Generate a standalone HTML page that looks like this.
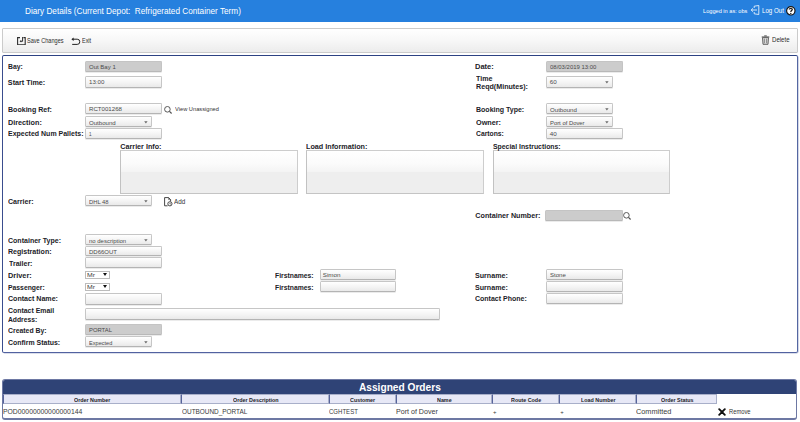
<!DOCTYPE html>
<html><head><meta charset="utf-8"><style>
*{box-sizing:border-box;margin:0;padding:0}
html,body{width:800px;height:422px;overflow:hidden;background:#fff;font-family:"Liberation Sans",sans-serif;position:relative}
.t{position:absolute;white-space:nowrap;transform-origin:0 0}
.b{position:absolute}
.in,.ro,.sel{position:absolute;border:1px solid #c6c6c6;border-bottom-color:#b4b4b4;border-radius:1.5px;background:linear-gradient(#ffffff 0%,#f4f4f4 55%,#e9e9e9 100%);box-shadow:0 1px 0 rgba(0,0,0,0.08)}
.ro{background:#cccccc;border-color:#c4c4c4;border-bottom-color:#b8b8b8}
.ar{position:absolute;width:0;height:0;border-left:1.75px solid transparent;border-right:1.75px solid transparent;border-top:2.2px solid #606060}
.ta{position:absolute;border:1px solid #cdcdcd;border-left-color:#c2c2c2;border-bottom-color:#c4c4c4;background:linear-gradient(#ffffff 0%,#fbfbfb 30%,#f4f4f4 49%,#eeeeee 50.5%,#eeeeee 100%)}
.nat{position:absolute;border:1px solid #bcbcbc;background:#fff}
.nar{position:absolute;width:0;height:0;border-left:2px solid transparent;border-right:2px solid transparent;border-top:3.4px solid #111}
</style></head><body>
<div class="b" style="left:0;top:0;width:800px;height:22px;background:#2680de"></div>
<svg class="b" style="left:750px;top:5px" width="10" height="10" viewBox="0 0 10 10"><path d="M4.2 1.2 L8.8 0.5 L8.8 9.5 L4.2 8.8" fill="none" stroke="#fff" stroke-width="0.8"/><path d="M4.2 1.2 V3 M4.2 7 V8.8" fill="none" stroke="#fff" stroke-width="0.8"/><path d="M7 5 H1.2 M3 3.3 L1.2 5 L3 6.7" fill="none" stroke="#fff" stroke-width="0.8"/></svg>
<svg class="b" style="left:785.5px;top:6px" width="10" height="10" viewBox="0 0 10 10"><circle cx="4.8" cy="4.8" r="4.2" fill="#fff" stroke="#151515" stroke-width="1.2"/><path d="M3.3 3.6 C3.3 2.1 6.3 2.1 6.3 3.6 C6.3 4.6 4.8 4.6 4.8 5.9" fill="none" stroke="#151515" stroke-width="1.2"/><circle cx="4.8" cy="7.4" r="0.7" fill="#151515"/></svg>
<div class="b" style="left:2px;top:28px;width:796px;height:25px;border:1px solid #cbcbcb;border-radius:1px;background:linear-gradient(#ffffff 0%,#f7f7f7 50%,#ececec 100%)"></div>
<svg class="b" style="left:16.5px;top:36.5px" width="9" height="8.5" viewBox="0 0 9 8.5"><path d="M3 0.6 H0.6 V7.9 H8.2 V0.6 H6.4" fill="none" stroke="#2e2e2e" stroke-width="1.1"/><path d="M5.6 0 V4.3 H3.6" fill="none" stroke="#2e2e2e" stroke-width="1"/><path d="M2.6 4.3 L4.2 3 V5.6 Z" fill="#2e2e2e"/></svg>
<svg class="b" style="left:70.5px;top:36.5px" width="10" height="8" viewBox="0 0 10 8"><path d="M1.8 2.2 H6.2 A2.6 2.6 0 0 1 6.2 7.4 H1.2" fill="none" stroke="#222" stroke-width="1"/><path d="M0.4 2.2 L2.6 0.4 V4 Z" fill="#222"/></svg>
<svg class="b" style="left:761px;top:35px" width="9" height="10" viewBox="0 0 9 10"><path d="M3.2 0.9 H5.8" stroke="#555" stroke-width="1"/><path d="M0.7 2 H8.3" stroke="#555" stroke-width="1.1"/><path d="M1.5 2.6 H7.5 L7 9.3 H2 Z" fill="#dcdcdc" stroke="#555" stroke-width="0.9"/><path d="M3.4 3.6 V8.2 M5.6 3.6 V8.2" stroke="#666" stroke-width="0.7"/></svg>
<div class="b" style="left:2px;top:55px;width:796px;height:298px;border:1px solid;border-color:#2d4283 #5567a2 #5262a0 #3a4d8e;border-radius:2px;box-shadow:0.6px 0.6px 0 rgba(90,106,165,0.45)"></div>
<div class="ro" style="left:85px;top:61px;width:77px;height:11px"></div>
<div class="in" style="left:85px;top:76px;width:77px;height:12px"></div>
<div class="in" style="left:85px;top:103px;width:77px;height:11px"></div>
<div class="sel" style="left:85px;top:116px;width:67px;height:11px"></div>
<svg class="b" style="left:144.3px;top:120.7px" width="4" height="3" viewBox="0 0 4 3"><path d="M0.2 0.3 H3.6 L1.9 2.6 Z" fill="#6a6a6a"/></svg>
<div class="in" style="left:85px;top:128px;width:77px;height:11px"></div>
<div class="ta" style="left:120px;top:150px;width:178px;height:44px"></div>
<div class="ta" style="left:306px;top:150px;width:178px;height:44px"></div>
<div class="ta" style="left:493px;top:150px;width:177px;height:44px"></div>
<div class="sel" style="left:85px;top:195px;width:67px;height:11px"></div>
<svg class="b" style="left:144.3px;top:199.7px" width="4" height="3" viewBox="0 0 4 3"><path d="M0.2 0.3 H3.6 L1.9 2.6 Z" fill="#6a6a6a"/></svg>
<div class="sel" style="left:85px;top:234px;width:67px;height:11px"></div>
<svg class="b" style="left:144.3px;top:238.7px" width="4" height="3" viewBox="0 0 4 3"><path d="M0.2 0.3 H3.6 L1.9 2.6 Z" fill="#6a6a6a"/></svg>
<div class="in" style="left:85px;top:246px;width:77px;height:10px"></div>
<div class="in" style="left:85px;top:257px;width:77px;height:11px"></div>
<div class="nat" style="left:85px;top:271px;width:25px;height:8px"></div><div class="nar" style="left:102.5px;top:273.3px"></div>
<div class="nat" style="left:85px;top:283px;width:25px;height:8px"></div><div class="nar" style="left:102.5px;top:285.3px"></div>
<div class="in" style="left:85px;top:293px;width:77px;height:12px"></div>
<div class="in" style="left:85px;top:308px;width:355px;height:12px"></div>
<div class="ro" style="left:85px;top:324px;width:77px;height:11px"></div>
<div class="sel" style="left:85px;top:336px;width:67px;height:11px"></div>
<svg class="b" style="left:144.3px;top:341.2px" width="4" height="3" viewBox="0 0 4 3"><path d="M0.2 0.3 H3.6 L1.9 2.6 Z" fill="#6a6a6a"/></svg>
<div class="in" style="left:320px;top:269px;width:76px;height:11px"></div>
<div class="in" style="left:320px;top:281px;width:76px;height:11px"></div>
<div class="ro" style="left:546px;top:61px;width:77px;height:11px"></div>
<div class="sel" style="left:546px;top:76px;width:67px;height:12px"></div>
<svg class="b" style="left:605.3px;top:80.7px" width="4" height="3" viewBox="0 0 4 3"><path d="M0.2 0.3 H3.6 L1.9 2.6 Z" fill="#6a6a6a"/></svg>
<div class="sel" style="left:546px;top:103px;width:67px;height:11px"></div>
<svg class="b" style="left:605.3px;top:108.2px" width="4" height="3" viewBox="0 0 4 3"><path d="M0.2 0.3 H3.6 L1.9 2.6 Z" fill="#6a6a6a"/></svg>
<div class="sel" style="left:546px;top:116px;width:67px;height:11px"></div>
<svg class="b" style="left:605.3px;top:120.7px" width="4" height="3" viewBox="0 0 4 3"><path d="M0.2 0.3 H3.6 L1.9 2.6 Z" fill="#6a6a6a"/></svg>
<div class="in" style="left:546px;top:128px;width:77px;height:11px"></div>
<div class="ro" style="left:545px;top:210px;width:78px;height:11px"></div>
<div class="in" style="left:546px;top:269px;width:77px;height:11px"></div>
<div class="in" style="left:546px;top:281px;width:77px;height:11px"></div>
<div class="in" style="left:546px;top:293px;width:77px;height:11px"></div>
<svg class="b" style="left:163.5px;top:105.5px" width="9" height="8" viewBox="0 0 9 8"><circle cx="3.4" cy="3.3" r="2.8" fill="none" stroke="#505050" stroke-width="0.95"/><path d="M5.5 5.4 L7.6 7.5" stroke="#505050" stroke-width="1.2"/></svg>
<svg class="b" style="left:622.5px;top:211.5px" width="9" height="8" viewBox="0 0 9 8"><circle cx="3.4" cy="3.3" r="2.8" fill="none" stroke="#505050" stroke-width="0.95"/><path d="M5.5 5.4 L7.6 7.5" stroke="#505050" stroke-width="1.2"/></svg>
<svg class="b" style="left:164px;top:196.5px" width="9" height="10" viewBox="0 0 9 10"><path d="M0.6 0.6 H4.6 L6.6 2.6 V4.4 M0.6 0.6 V8.8 H3.6" fill="none" stroke="#333" stroke-width="0.9"/><path d="M4.6 0.6 V2.6 H6.6" fill="none" stroke="#333" stroke-width="0.6"/><circle cx="5.9" cy="6.8" r="2.1" fill="#fff" stroke="#333" stroke-width="0.9"/><path d="M5.9 5.8 V7 H6.9" fill="none" stroke="#333" stroke-width="0.6"/></svg>
<div class="b" style="left:2px;top:379px;width:795px;height:41px;border:1px solid #6d78a3;border-bottom:2px solid #6d78a3;border-radius:3px;background:#fff;overflow:hidden"><div class="b" style="left:0;top:0;right:0;height:14px;background:#2f4376"></div></div>
<div class="b" style="left:3px;top:394px;width:178px;height:10px;background:#e7e8f6;border:1px solid #a8afc9;border-left:1.5px solid #56639a"></div>
<div class="b" style="left:181px;top:394px;width:148px;height:10px;background:#e7e8f6;border:1px solid #a8afc9;border-left:1.5px solid #56639a"></div>
<div class="b" style="left:329px;top:394px;width:66.5px;height:10px;background:#e7e8f6;border:1px solid #a8afc9;border-left:1.5px solid #56639a"></div>
<div class="b" style="left:395.5px;top:394px;width:96.5px;height:10px;background:#e7e8f6;border:1px solid #a8afc9;border-left:1.5px solid #56639a"></div>
<div class="b" style="left:492px;top:394px;width:67px;height:10px;background:#e7e8f6;border:1px solid #a8afc9;border-left:1.5px solid #56639a"></div>
<div class="b" style="left:559px;top:394px;width:77px;height:10px;background:#e7e8f6;border:1px solid #a8afc9;border-left:1.5px solid #56639a"></div>
<div class="b" style="left:636px;top:394px;width:80.5px;height:10px;background:#e7e8f6;border:1px solid #a8afc9;border-left:1.5px solid #56639a"></div>
<svg class="b" style="left:718px;top:407.5px" width="8" height="8" viewBox="0 0 8 8"><path d="M1.2 1.2 L6.8 6.8 M6.8 1.2 L1.2 6.8" stroke="#111" stroke-width="1.9" stroke-linecap="round"/></svg>
<div class="t" style="left:24.51px;top:5.00px;font-size:8.3px;line-height:12px;font-weight:normal;color:#ffffff;transform:scaleX(0.9885);">Diary Details (Current Depot:&nbsp; Refrigerated Container Term)</div>
<div class="t" style="left:703.25px;top:7.00px;font-size:5.6px;line-height:9px;font-weight:normal;color:#ffffff;transform:scaleX(1.0057);">Logged in as: obs</div>
<div class="t" style="left:761.53px;top:6.00px;font-size:6.5px;line-height:10px;font-weight:normal;color:#ffffff;transform:scaleX(0.9467);">Log Out</div>
<div class="t" style="left:27.35px;top:36.00px;font-size:7px;line-height:10px;font-weight:normal;color:#2b2b2b;transform:scaleX(0.7956);">Save Changes</div>
<div class="t" style="left:82.11px;top:36.00px;font-size:7px;line-height:10px;font-weight:normal;color:#2b2b2b;transform:scaleX(0.7778);">Exit</div>
<div class="t" style="left:771.81px;top:35.00px;font-size:6.9px;line-height:10px;font-weight:normal;color:#2b2b2b;transform:scaleX(0.8816);">Delete</div>
<div class="t" style="left:8.03px;top:61.00px;font-size:7.2px;line-height:11px;font-weight:bold;color:#1c1c28;transform:scaleX(0.9483);">Bay:</div>
<div class="t" style="left:7.85px;top:77.00px;font-size:7.2px;line-height:11px;font-weight:bold;color:#1c1c28;">Start Time:</div>
<div class="t" style="left:8.01px;top:104.00px;font-size:7.2px;line-height:11px;font-weight:bold;color:#1c1c28;transform:scaleX(0.9828);">Booking Ref:</div>
<div class="t" style="left:8.00px;top:117.00px;font-size:7.2px;line-height:11px;font-weight:bold;color:#1c1c28;transform:scaleX(1.0078);">Direction:</div>
<div class="t" style="left:8.01px;top:128.00px;font-size:7.2px;line-height:11px;font-weight:bold;color:#1c1c28;transform:scaleX(0.9738);">Expected Num Pallets:</div>
<div class="t" style="left:120.35px;top:141.00px;font-size:7.2px;line-height:11px;font-weight:bold;color:#1c1c28;">Carrier Info:</div>
<div class="t" style="left:306.40px;top:141.00px;font-size:7.2px;line-height:11px;font-weight:bold;color:#1c1c28;transform:scaleX(1.0050);">Load Information:</div>
<div class="t" style="left:492.76px;top:141.00px;font-size:7.2px;line-height:11px;font-weight:bold;color:#1c1c28;transform:scaleX(0.9570);">Special Instructions:</div>
<div class="t" style="left:8.25px;top:196.00px;font-size:7.2px;line-height:11px;font-weight:bold;color:#1c1c28;transform:scaleX(0.9840);">Carrier:</div>
<div class="t" style="left:475.35px;top:210.00px;font-size:7.2px;line-height:11px;font-weight:bold;color:#1c1c28;">Container Number:</div>
<div class="t" style="left:8.26px;top:235.00px;font-size:7.2px;line-height:11px;font-weight:bold;color:#1c1c28;transform:scaleX(0.9784);">Container Type:</div>
<div class="t" style="left:8.01px;top:246.00px;font-size:7.2px;line-height:11px;font-weight:bold;color:#1c1c28;transform:scaleX(0.9827);">Registration:</div>
<div class="t" style="left:8.50px;top:258.00px;font-size:7.2px;line-height:11px;font-weight:bold;color:#1c1c28;transform:scaleX(0.9785);">Trailer:</div>
<div class="t" style="left:7.99px;top:270.00px;font-size:7.2px;line-height:11px;font-weight:bold;color:#1c1c28;transform:scaleX(1.0227);">Driver:</div>
<div class="t" style="left:8.03px;top:282.00px;font-size:7.2px;line-height:11px;font-weight:bold;color:#1c1c28;transform:scaleX(0.9467);">Passenger:</div>
<div class="t" style="left:8.25px;top:293.00px;font-size:7.2px;line-height:11px;font-weight:bold;color:#1c1c28;transform:scaleX(0.9849);">Contact Name:</div>
<div class="t" style="left:8.26px;top:305.00px;font-size:7.2px;line-height:11px;font-weight:bold;color:#1c1c28;transform:scaleX(0.9630);">Contact Email</div>
<div class="t" style="left:8.27px;top:314.00px;font-size:7.2px;line-height:11px;font-weight:bold;color:#1c1c28;transform:scaleX(0.9388);">Address:</div>
<div class="t" style="left:8.26px;top:325.00px;font-size:7.2px;line-height:11px;font-weight:bold;color:#1c1c28;transform:scaleX(0.9557);">Created By:</div>
<div class="t" style="left:8.26px;top:337.00px;font-size:7.2px;line-height:11px;font-weight:bold;color:#1c1c28;transform:scaleX(0.9670);">Confirm Status:</div>
<div class="t" style="left:275.13px;top:270.00px;font-size:7.2px;line-height:11px;font-weight:bold;color:#1c1c28;transform:scaleX(0.9468);">Firstnames:</div>
<div class="t" style="left:275.13px;top:282.00px;font-size:7.2px;line-height:11px;font-weight:bold;color:#1c1c28;transform:scaleX(0.9468);">Firstnames:</div>
<div class="t" style="left:475.48px;top:61.00px;font-size:7.2px;line-height:11px;font-weight:bold;color:#1c1c28;transform:scaleX(1.0448);">Date:</div>
<div class="t" style="left:476.00px;top:73.00px;font-size:7.2px;line-height:11px;font-weight:bold;color:#1c1c28;transform:scaleX(0.9848);">Time</div>
<div class="t" style="left:475.50px;top:81.00px;font-size:7.2px;line-height:11px;font-weight:bold;color:#1c1c28;transform:scaleX(0.9932);">Reqd(Minutes):</div>
<div class="t" style="left:475.51px;top:104.00px;font-size:7.2px;line-height:11px;font-weight:bold;color:#1c1c28;transform:scaleX(0.9762);">Booking Type:</div>
<div class="t" style="left:475.75px;top:117.00px;font-size:7.2px;line-height:11px;font-weight:bold;color:#1c1c28;transform:scaleX(1.0105);">Owner:</div>
<div class="t" style="left:475.76px;top:128.00px;font-size:7.2px;line-height:11px;font-weight:bold;color:#1c1c28;transform:scaleX(0.9426);">Cartons:</div>
<div class="t" style="left:475.35px;top:270.00px;font-size:7.2px;line-height:11px;font-weight:bold;color:#1c1c28;transform:scaleX(0.9891);">Surname:</div>
<div class="t" style="left:475.35px;top:282.00px;font-size:7.2px;line-height:11px;font-weight:bold;color:#1c1c28;transform:scaleX(0.9891);">Surname:</div>
<div class="t" style="left:475.36px;top:293.00px;font-size:7.2px;line-height:11px;font-weight:bold;color:#1c1c28;transform:scaleX(0.9742);">Contact Phone:</div>
<div class="t" style="left:88.76px;top:62.00px;font-size:6.25px;line-height:10px;font-weight:normal;color:#4a4a4a;transform:scaleX(0.9615);">Out Bay 1</div>
<div class="t" style="left:88.71px;top:77.00px;font-size:6.25px;line-height:10px;font-weight:normal;color:#4a4a4a;transform:scaleX(0.9867);">13:00</div>
<div class="t" style="left:88.51px;top:104.00px;font-size:6.25px;line-height:10px;font-weight:normal;color:#4a4a4a;transform:scaleX(0.9773);">RCT001268</div>
<div class="t" style="left:88.96px;top:118.00px;font-size:6.25px;line-height:10px;font-weight:normal;color:#4a4a4a;transform:scaleX(0.9720);">Outbound</div>
<div class="t" style="left:89.14px;top:129.00px;font-size:6.25px;line-height:10px;font-weight:normal;color:#4a4a4a;transform:scaleX(0.7273);">1</div>
<div class="t" style="left:88.74px;top:197.00px;font-size:6.25px;line-height:10px;font-weight:normal;color:#4a4a4a;transform:scaleX(0.9284);">DHL 48</div>
<div class="t" style="left:88.72px;top:236.00px;font-size:6.25px;line-height:10px;font-weight:normal;color:#4a4a4a;transform:scaleX(0.9553);">no description</div>
<div class="t" style="left:88.72px;top:247.00px;font-size:6.25px;line-height:10px;font-weight:normal;color:#4a4a4a;transform:scaleX(0.9579);">DD66OUT</div>
<div class="t" style="left:88.73px;top:325.00px;font-size:6.25px;line-height:10px;font-weight:normal;color:#4a4a4a;transform:scaleX(0.9389);">PORTAL</div>
<div class="t" style="left:88.75px;top:338.00px;font-size:6.25px;line-height:10px;font-weight:normal;color:#4a4a4a;transform:scaleX(0.8950);">Expected</div>
<div class="t" style="left:322.75px;top:270.00px;font-size:6.25px;line-height:10px;font-weight:normal;color:#4a4a4a;">Simon</div>
<div class="t" style="left:549.76px;top:62.00px;font-size:6.25px;line-height:10px;font-weight:normal;color:#4a4a4a;transform:scaleX(0.9534);">08/03/2019 13:00</div>
<div class="t" style="left:549.75px;top:77.00px;font-size:6.25px;line-height:10px;font-weight:normal;color:#4a4a4a;">60</div>
<div class="t" style="left:549.76px;top:105.00px;font-size:6.25px;line-height:10px;font-weight:normal;color:#4a4a4a;transform:scaleX(0.9794);">Outbound</div>
<div class="t" style="left:549.53px;top:118.00px;font-size:6.25px;line-height:10px;font-weight:normal;color:#4a4a4a;transform:scaleX(0.9379);">Port of Dover</div>
<div class="t" style="left:549.75px;top:129.00px;font-size:6.25px;line-height:10px;font-weight:normal;color:#4a4a4a;">40</div>
<div class="t" style="left:549.76px;top:270.00px;font-size:6.25px;line-height:10px;font-weight:normal;color:#4a4a4a;transform:scaleX(0.9651);">Stone</div>
<div class="t" style="left:86.51px;top:271.00px;font-size:5.8px;line-height:9px;font-weight:normal;color:#444;transform:scaleX(1.1840);">Mr</div>
<div class="t" style="left:86.51px;top:283.00px;font-size:5.8px;line-height:9px;font-weight:normal;color:#444;transform:scaleX(1.1840);">Mr</div>
<div class="t" style="left:174.80px;top:105.00px;font-size:5.2px;line-height:9px;font-weight:normal;color:#333;transform:scaleX(1.0994);">View Unassigned</div>
<div class="t" style="left:174.25px;top:197.00px;font-size:6.9px;line-height:10px;font-weight:normal;color:#333;transform:scaleX(0.9149);">Add</div>
<div class="t" style="left:359.15px;top:381.00px;font-size:10px;line-height:13px;font-weight:bold;color:#ffffff;transform:scaleX(1.0150);">Assigned Orders</div>
<div class="t" style="left:73.78px;top:396.00px;font-size:6px;line-height:9px;font-weight:bold;color:#1c1c28;transform:scaleX(0.8944);">Order Number</div>
<div class="t" style="left:232.69px;top:396.00px;font-size:6px;line-height:9px;font-weight:bold;color:#1c1c28;transform:scaleX(0.8944);">Order Description</div>
<div class="t" style="left:350.12px;top:396.00px;font-size:6px;line-height:9px;font-weight:bold;color:#1c1c28;transform:scaleX(0.8944);">Customer</div>
<div class="t" style="left:436.76px;top:396.00px;font-size:6px;line-height:9px;font-weight:bold;color:#1c1c28;transform:scaleX(0.8944);">Name</div>
<div class="t" style="left:510.80px;top:396.00px;font-size:6px;line-height:9px;font-weight:bold;color:#1c1c28;transform:scaleX(0.8944);">Route Code</div>
<div class="t" style="left:580.56px;top:396.00px;font-size:6px;line-height:9px;font-weight:bold;color:#1c1c28;transform:scaleX(0.8944);">Load Number</div>
<div class="t" style="left:660.54px;top:396.00px;font-size:6px;line-height:9px;font-weight:bold;color:#1c1c28;transform:scaleX(0.8944);">Order Status</div>
<div class="t" style="left:3.28px;top:406.00px;font-size:7.2px;line-height:11px;font-weight:normal;color:#3a3a3a;transform:scaleX(0.9488);">POD00000000000000144</div>
<div class="t" style="left:181.68px;top:406.00px;font-size:7.2px;line-height:11px;font-weight:normal;color:#3a3a3a;transform:scaleX(0.8935);">OUTBOUND_PORTAL</div>
<div class="t" style="left:329.33px;top:406.00px;font-size:7.2px;line-height:11px;font-weight:normal;color:#3a3a3a;transform:scaleX(0.8400);">CGHTEST</div>
<div class="t" style="left:396.41px;top:406.00px;font-size:7.2px;line-height:11px;font-weight:normal;color:#3a3a3a;transform:scaleX(0.9868);">Port of Dover</div>
<div class="t" style="left:493.05px;top:408.00px;font-size:6px;line-height:9px;font-weight:normal;color:#3a3a3a;">+</div>
<div class="t" style="left:560.25px;top:408.00px;font-size:6px;line-height:9px;font-weight:normal;color:#3a3a3a;">+</div>
<div class="t" style="left:636.39px;top:406.00px;font-size:7.2px;line-height:11px;font-weight:normal;color:#3a3a3a;transform:scaleX(1.0178);">Committed</div>
<div class="t" style="left:728.58px;top:407.00px;font-size:6.9px;line-height:10px;font-weight:normal;color:#333;transform:scaleX(0.8384);">Remove</div>
</body></html>
